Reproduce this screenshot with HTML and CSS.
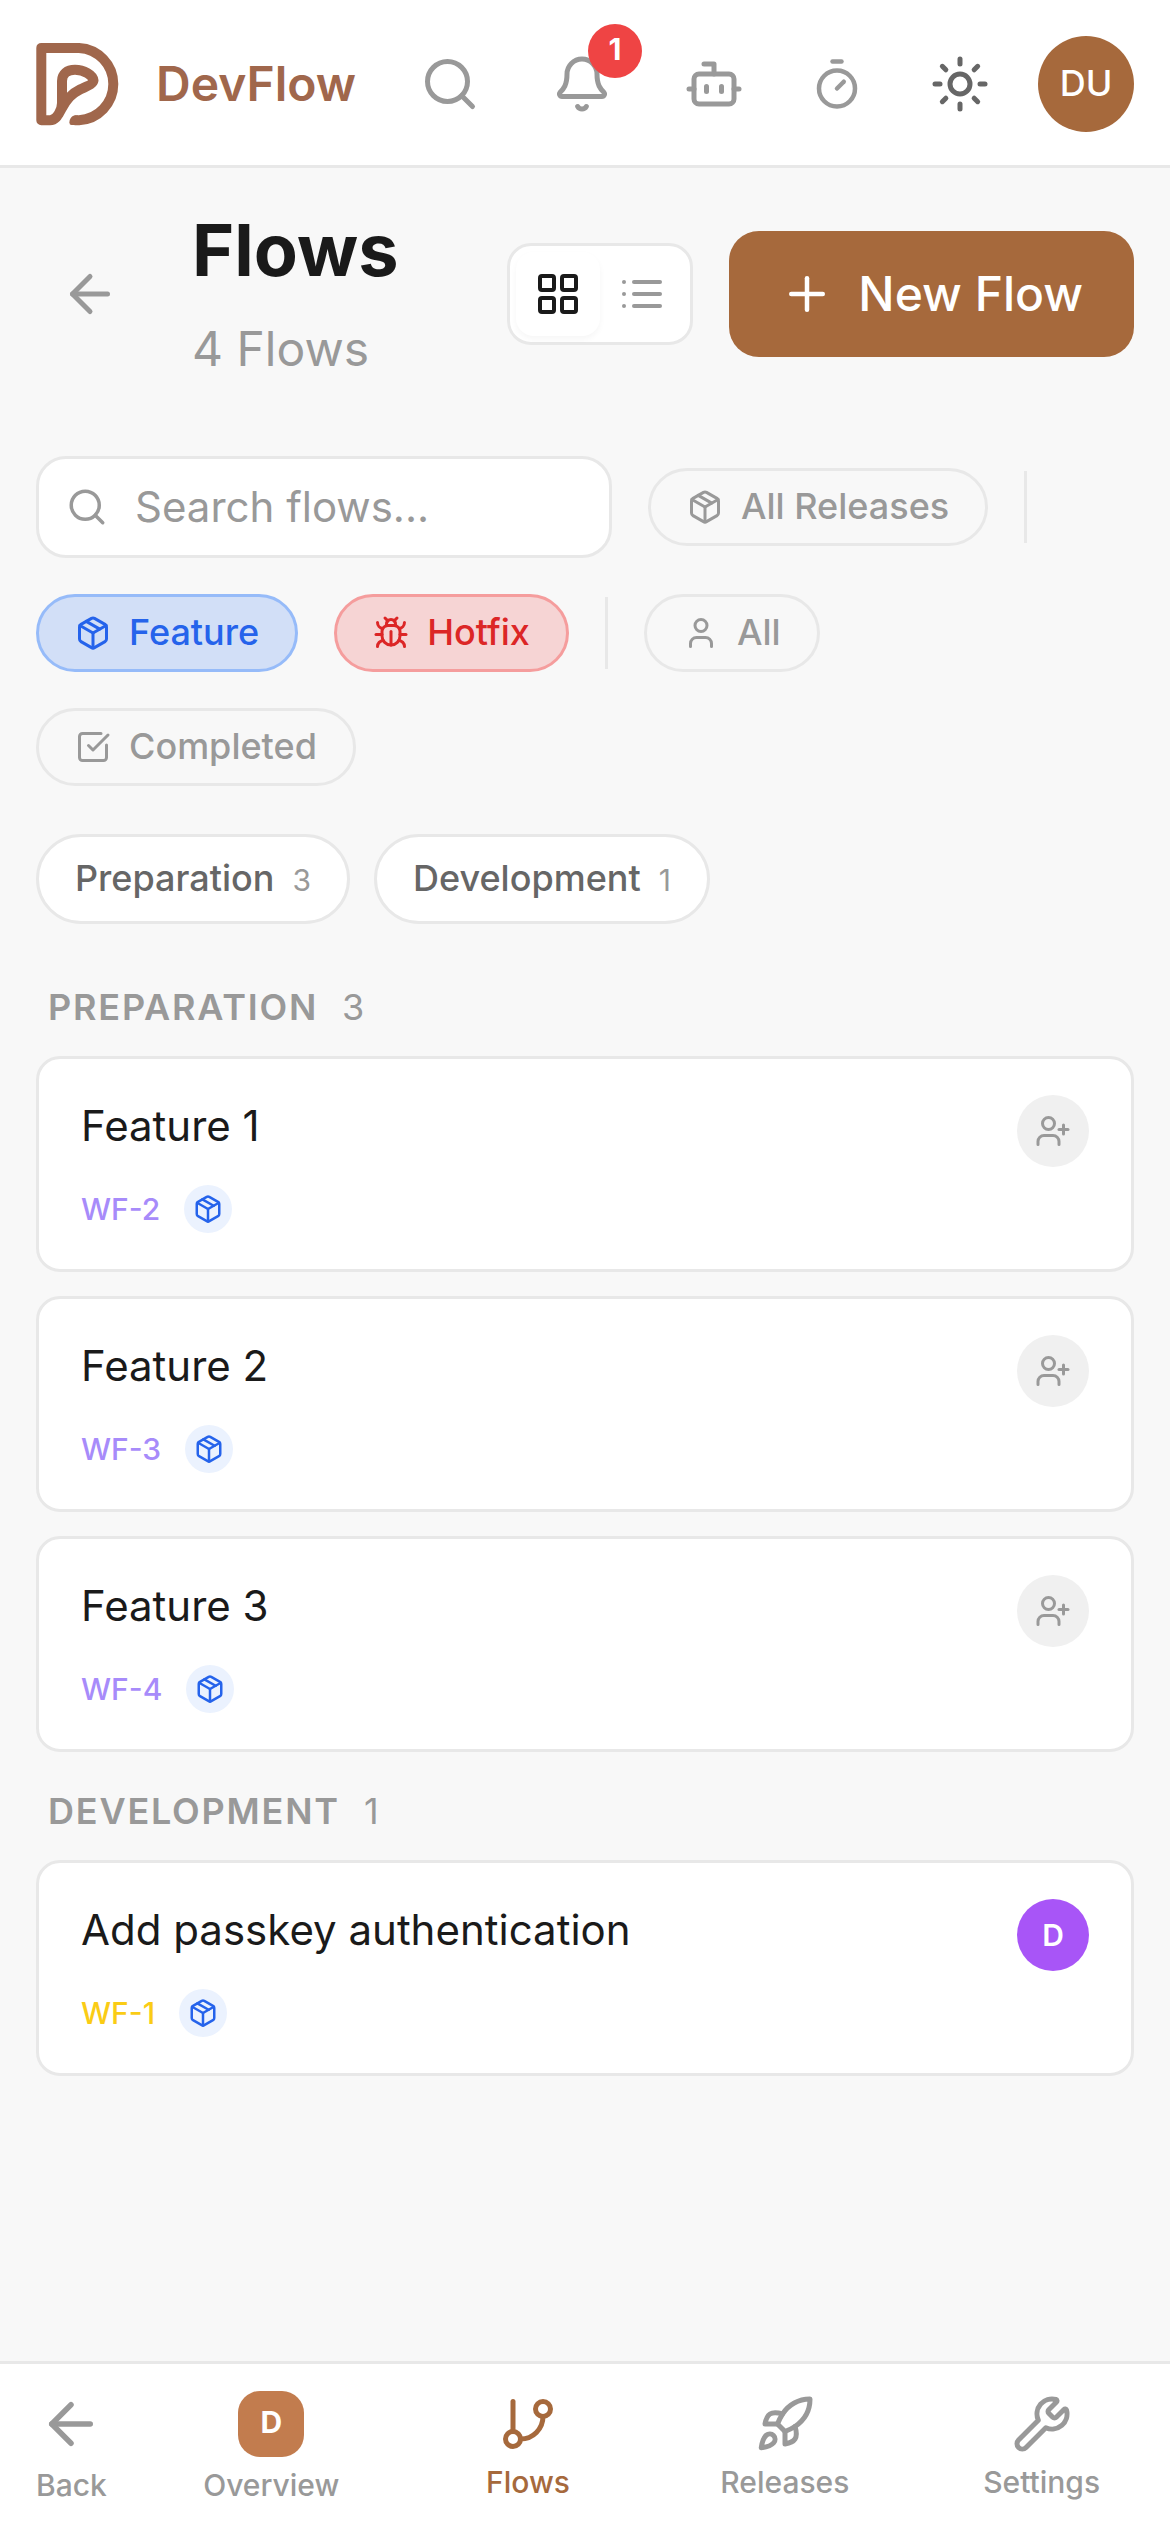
FILE: index.html
```
<!DOCTYPE html>
<html lang="en">
<head>
    <meta charset="UTF-8">
    <meta name="viewport" content="width=device-width, initial-scale=1.0">
    <title>Flows - DevFlow</title>
    <link rel="stylesheet" href="styles.css">
</head>
<body>
    <!-- Shared icons -->
    <svg class="sprite" aria-hidden="true">
        <symbol id="i-search" viewBox="0 0 24 24"><circle cx="11" cy="11" r="8"/><path d="m21 21-4.3-4.3"/></symbol>
        <symbol id="i-back" viewBox="0 0 24 24"><path d="m12 19-7-7 7-7"/><path d="M19 12H5"/></symbol>
        <symbol id="i-package" viewBox="0 0 24 24"><path d="M11 21.73a2 2 0 0 0 2 0l7-4A2 2 0 0 0 21 16V8a2 2 0 0 0-1-1.73l-7-4a2 2 0 0 0-2 0l-7 4A2 2 0 0 0 3 8v8a2 2 0 0 0 1 1.73z"/><path d="M12 22V12"/><path d="M3.29 7 12 12l8.71-5"/><path d="m7.5 4.27 9 5.15"/></symbol>
        <symbol id="i-user-plus" viewBox="0 0 24 24"><path d="M16 21v-2a4 4 0 0 0-4-4H6a4 4 0 0 0-4 4v2"/><circle cx="9" cy="7" r="4"/><path d="M19 8v6"/><path d="M22 11h-6"/></symbol>
    </svg>

    <header class="topbar">
        <a class="brand" href="#">
            <svg class="logo" viewBox="0 0 84 84">
                <path d="M38.5 78.2H43A36.2 36.2 0 0 0 43 5.9H5.3V78.2H14C20 78.2 22 73 26 66C31 57 35 52 44 47.5C50 44.5 57 42.5 57.5 38.5C57 33 48 27.8 39 27.8C31 27.8 26 32 26 39V61C26 68 21 78.2 14 78.2"/>
                <path class="logo-end" d="M38.5 73.4C35.5 74 33.4 77 33.4 80.5Q33.4 83 35.5 83H42V73.4Z"/>
            </svg>
            <span>DevFlow</span>
        </a>
        <div class="actions">
            <button class="icon-btn"><svg class="icon"><use href="#i-search"/></svg></button>
            <button class="icon-btn">
                <svg class="icon" viewBox="0 0 24 24"><path d="M10.268 21a2 2 0 0 0 3.464 0"/><path d="M3.262 15.326A1 1 0 0 0 4 17h16a1 1 0 0 0 .74-1.673C19.41 13.956 18 12.499 18 8A6 6 0 0 0 6 8c0 4.499-1.411 5.956-2.738 7.326"/></svg>
                <span class="badge">1</span>
            </button>
            <button class="icon-btn"><svg class="icon" viewBox="0 0 24 24"><path d="M12 8V4H8"/><rect width="16" height="12" x="4" y="8" rx="2"/><path d="M2 14h2"/><path d="M20 14h2"/><path d="M15 13v2"/><path d="M9 13v2"/></svg></button>
            <button class="icon-btn timer"><svg class="icon" viewBox="0 0 24 24"><path d="M10 2h4"/><path d="m12 14 3-3"/><circle cx="12" cy="14" r="8"/></svg></button>
            <button class="icon-btn theme"><svg class="icon" viewBox="0 0 24 24"><circle cx="12" cy="12" r="4"/><path d="M12 2v2"/><path d="M12 20v2"/><path d="m4.93 4.93 1.41 1.41"/><path d="m17.66 17.66 1.41 1.41"/><path d="M2 12h2"/><path d="M20 12h2"/><path d="m6.34 17.66-1.41 1.41"/><path d="m19.07 4.93-1.41 1.41"/></svg></button>
            <div class="avatar">DU</div>
        </div>
    </header>

    <main>
        <div class="page-head">
            <button class="icon-btn"><svg class="icon"><use href="#i-back"/></svg></button>
            <div class="page-title">
                <h1>Flows</h1>
                <p>4 Flows</p>
            </div>
            <div class="view-toggle">
                <button class="active"><svg class="icon" viewBox="0 0 24 24"><rect width="7" height="7" x="3" y="3" rx="1"/><rect width="7" height="7" x="14" y="3" rx="1"/><rect width="7" height="7" x="14" y="14" rx="1"/><rect width="7" height="7" x="3" y="14" rx="1"/></svg></button>
                <button><svg class="icon" viewBox="0 0 24 24"><path d="M3 6h.01"/><path d="M3 12h.01"/><path d="M3 18h.01"/><path d="M8 6h13"/><path d="M8 12h13"/><path d="M8 18h13"/></svg></button>
            </div>
            <button class="btn-primary">
                <svg class="icon" viewBox="0 0 24 24"><path d="M5 12h14"/><path d="M12 5v14"/></svg>
                New Flow
            </button>
        </div>

        <div class="filters">
            <label class="search">
                <svg class="icon"><use href="#i-search"/></svg>
                <input type="text" placeholder="Search flows...">
            </label>
            <button class="chip"><svg class="icon"><use href="#i-package"/></svg>All Releases</button>
            <span class="divider"></span>
            <button class="chip feature"><svg class="icon"><use href="#i-package"/></svg>Feature</button>
            <button class="chip hotfix"><svg class="icon" viewBox="0 0 24 24"><path d="m8 2 1.88 1.88"/><path d="M14.12 3.88 16 2"/><path d="M9 7.13v-1a3.003 3.003 0 1 1 6 0v1"/><path d="M12 20c-3.3 0-6-2.7-6-6v-3a4 4 0 0 1 4-4h4a4 4 0 0 1 4 4v3c0 3.3-2.7 6-6 6"/><path d="M12 20v-9"/><path d="M6.53 9C4.6 8.8 3 7.1 3 5"/><path d="M6 13H2"/><path d="M3 21c0-2.1 1.7-3.9 3.8-4"/><path d="M20.97 5c0 2.1-1.6 3.8-3.5 4"/><path d="M22 13h-4"/><path d="M17.2 17c2.1.1 3.8 1.9 3.8 4"/></svg>Hotfix</button>
            <span class="divider"></span>
            <button class="chip"><svg class="icon" viewBox="0 0 24 24"><path d="M19 21v-2a4 4 0 0 0-4-4H9a4 4 0 0 0-4 4v2"/><circle cx="12" cy="7" r="4"/></svg>All</button>
            <button class="chip"><svg class="icon" viewBox="0 0 24 24"><path d="M21 10.656V19a2 2 0 0 1-2 2H5a2 2 0 0 1-2-2V5a2 2 0 0 1 2-2h12.344"/><path d="m9 11 3 3L22 4"/></svg>Completed</button>
        </div>

        <div class="stages">
            <button class="stage">Preparation <span>3</span></button>
            <button class="stage">Development <span>1</span></button>
        </div>

        <section class="group">
            <h2>Preparation <span>3</span></h2>
            <article class="card">
                <div class="card-top">
                    <h3>Feature 1</h3>
                    <button class="assignee"><svg class="icon"><use href="#i-user-plus"/></svg></button>
                </div>
                <div class="card-meta"><span class="key">WF-2</span><span class="type"><svg class="icon"><use href="#i-package"/></svg></span></div>
            </article>
            <article class="card">
                <div class="card-top">
                    <h3>Feature 2</h3>
                    <button class="assignee"><svg class="icon"><use href="#i-user-plus"/></svg></button>
                </div>
                <div class="card-meta"><span class="key">WF-3</span><span class="type"><svg class="icon"><use href="#i-package"/></svg></span></div>
            </article>
            <article class="card">
                <div class="card-top">
                    <h3>Feature 3</h3>
                    <button class="assignee"><svg class="icon"><use href="#i-user-plus"/></svg></button>
                </div>
                <div class="card-meta"><span class="key">WF-4</span><span class="type"><svg class="icon"><use href="#i-package"/></svg></span></div>
            </article>
        </section>

        <section class="group">
            <h2>Development <span>1</span></h2>
            <article class="card">
                <div class="card-top">
                    <h3>Add passkey authentication</h3>
                    <button class="assignee assigned">D</button>
                </div>
                <div class="card-meta"><span class="key in-dev">WF-1</span><span class="type"><svg class="icon"><use href="#i-package"/></svg></span></div>
            </article>
        </section>
    </main>

    <nav class="bottom-nav">
        <a class="nav-item nav-back" href="#"><svg class="icon"><use href="#i-back"/></svg>Back</a>
        <div class="nav-links">
            <a class="nav-item" href="#"><span class="project">D</span>Overview</a>
            <a class="nav-item current" href="#"><svg class="icon" viewBox="0 0 24 24"><path d="M6 3v12"/><circle cx="18" cy="6" r="3"/><circle cx="6" cy="18" r="3"/><path d="M18 9a9 9 0 0 1-9 9"/></svg>Flows</a>
            <a class="nav-item" href="#"><svg class="icon" viewBox="0 0 24 24"><path d="M4.5 16.5c-1.5 1.26-2 5-2 5s3.74-.5 5-2c.71-.84.7-2.13-.09-2.91a2.18 2.18 0 0 0-2.91-.09z"/><path d="m12 15-3-3a22 22 0 0 1 2-3.95A12.88 12.88 0 0 1 22 2c0 2.72-.78 7.5-6 11a22.35 22.35 0 0 1-4 2z"/><path d="M9 12H4s.55-3.03 2-4c1.62-1.08 5 0 5 0"/><path d="M12 15v5s3.03-.55 4-2c1.08-1.62 0-5 0-5"/></svg>Releases</a>
            <a class="nav-item" href="#"><svg class="icon" viewBox="0 0 24 24"><path d="M14.7 6.3a1 1 0 0 0 0 1.4l1.6 1.6a1 1 0 0 0 1.4 0l3.106-3.105c.32-.322.863-.22.983.218a6 6 0 0 1-8.259 7.057l-7.91 7.91a1 1 0 0 1-2.999-3l7.91-7.91a6 6 0 0 1 7.057-8.259c.438.12.54.662.219.984z"/></svg>Settings</a>
        </div>
    </nav>
</body>
</html>
```
FILE: styles.css
```
:root {
    --bg: #f8f8f8;
    --surface: #ffffff;
    --border: #e8e8e8;
    --text: #1a1a1a;
    --text-mid: #666666;
    --text-soft: #999999;
    --primary: #a6693c;
}

* {
    box-sizing: border-box;
    margin: 0;
    padding: 0;
}

body {
    display: flex;
    flex-direction: column;
    height: 100vh;
    font-family: 'Inter', sans-serif;
    line-height: 1.5;
    color: var(--text);
    background-color: var(--bg);
    overflow: hidden;
}

button,
input {
    font: inherit;
    color: inherit;
    background: none;
    border: none;
}

a {
    color: inherit;
    text-decoration: none;
}

.sprite {
    display: none;
}

.icon {
    display: block;
    flex-shrink: 0;
    width: 60px;
    height: 60px;
    fill: none;
    stroke: currentColor;
    stroke-width: 2;
    stroke-linecap: round;
    stroke-linejoin: round;
}

/* Top bar */
.topbar {
    display: flex;
    align-items: center;
    justify-content: space-between;
    height: 168px;
    padding: 3px 36px 0;
    background-color: var(--surface);
    border-bottom: 3px solid var(--border);
}

.brand {
    display: flex;
    align-items: center;
    gap: 36px;
    font-size: 48px;
    font-weight: 600;
    color: #a0674c;
}

.logo {
    width: 84px;
    height: 84px;
    fill: none;
    stroke: currentColor;
    stroke-width: 10;
    stroke-linejoin: round;
}

.logo-end {
    fill: currentColor;
    stroke: none;
}

.actions {
    display: flex;
    align-items: center;
    gap: 24px;
}

.icon-btn {
    position: relative;
    padding: 24px;
    color: var(--text-soft);
}

.timer {
    padding: 18px;
}

.timer .icon {
    width: 54px;
    height: 54px;
}

.theme {
    color: var(--text-mid);
}

.badge {
    position: absolute;
    top: -6px;
    right: -6px;
    width: 54px;
    height: 54px;
    border-radius: 50%;
    background-color: #ef4444;
    color: white;
    font-size: 30px;
    font-weight: 700;
    line-height: 51px;
    text-align: center;
}

.avatar {
    width: 96px;
    height: 96px;
    border-radius: 50%;
    background-color: var(--primary);
    color: white;
    font-size: 36px;
    font-weight: 500;
    line-height: 95px;
    text-align: center;
}

/* Page content */
main {
    flex: 1;
    padding: 36px;
}

.page-head {
    display: flex;
    align-items: center;
    height: 180px;
    margin-bottom: 72px;
}

.page-title {
    flex: 1;
    margin-left: 48px;
}

.page-title h1 {
    font-size: 72px;
    font-weight: 700;
    line-height: 92px;
    margin-bottom: 17px;
}

.page-title p {
    font-size: 48px;
    color: var(--text-soft);
}

.view-toggle {
    display: flex;
    padding: 6px;
    margin-right: 36px;
    border: 3px solid var(--border);
    border-radius: 24px;
    background-color: var(--surface);
}

.view-toggle button {
    padding: 18px;
    border-radius: 18px;
    color: var(--text-soft);
}

.view-toggle .icon {
    width: 48px;
    height: 48px;
}

.view-toggle .active {
    color: var(--text);
    box-shadow: 0 3px 6px rgba(0, 0, 0, 0.04);
}

.btn-primary {
    display: flex;
    align-items: center;
    gap: 24px;
    height: 126px;
    padding: 0 51px;
    border-radius: 30px;
    background-color: var(--primary);
    color: white;
    font-size: 48px;
    font-weight: 500;
}

.btn-primary .icon {
    width: 54px;
    height: 54px;
}

/* Filters */
.filters {
    display: flex;
    flex-wrap: wrap;
    align-items: center;
    gap: 36px;
    padding-right: 36px;
    margin-bottom: 48px;
}

.search {
    display: flex;
    align-items: center;
    gap: 27px;
    width: 576px;
    height: 102px;
    padding: 0 27px;
    border: 3px solid var(--border);
    border-radius: 30px;
    background-color: var(--surface);
    color: var(--text-soft);
}

.search .icon {
    width: 42px;
    height: 42px;
}

.search input {
    flex: 1;
    min-width: 0;
    padding-bottom: 2px;
    font-size: 42px;
    outline: none;
}

.search input::placeholder {
    color: var(--text-soft);
}

.chip {
    display: flex;
    align-items: center;
    gap: 18px;
    height: 78px;
    padding: 0 36px 2px;
    border: 3px solid var(--border);
    border-radius: 39px;
    color: var(--text-soft);
    font-size: 36px;
    font-weight: 500;
}

.chip .icon {
    width: 36px;
    height: 36px;
    margin-top: 2px;
}

.chip.feature {
    color: #2563eb;
    background-color: #d2dff7;
    border-color: #96bbf9;
}

.chip.hotfix {
    color: #dc2626;
    background-color: #f6d4d4;
    border-color: #f59d9d;
}

.divider {
    width: 3px;
    height: 72px;
    background-color: var(--border);
}

/* Stage tabs */
.stages {
    display: flex;
    gap: 24px;
    margin-bottom: 56px;
}

.stage {
    display: flex;
    align-items: baseline;
    gap: 18px;
    height: 90px;
    padding: 14px 36px 16px;
    border: 3px solid var(--border);
    border-radius: 45px;
    background-color: var(--surface);
    color: var(--text-mid);
    font-size: 36px;
    font-weight: 500;
}

.stage span {
    font-size: 30px;
    font-weight: 400;
    color: var(--text-soft);
}

/* Flow groups */
.group {
    display: flex;
    flex-direction: column;
    gap: 24px;
    margin-bottom: 32px;
}

.group h2 {
    display: flex;
    gap: 24px;
    padding-left: 12px;
    margin-bottom: -2px;
    color: var(--text-soft);
    font-size: 36px;
    font-weight: 600;
    letter-spacing: 0.05em;
    text-transform: uppercase;
}

.group h2 span {
    font-weight: 400;
}

.card {
    height: 216px;
    padding: 36px 42px;
    border: 3px solid var(--border);
    border-radius: 24px;
    background-color: var(--surface);
}

.card-top {
    display: flex;
    justify-content: space-between;
    align-items: flex-start;
    margin-bottom: 18px;
}

.card h3 {
    font-size: 42px;
    font-weight: 400;
    line-height: 61px;
}

.assignee {
    display: flex;
    align-items: center;
    justify-content: center;
    width: 72px;
    height: 72px;
    border-radius: 50%;
    background-color: #f0f0f0;
    color: var(--text-soft);
    font-size: 30px;
    font-weight: 600;
}

.assignee .icon {
    width: 36px;
    height: 36px;
}

.assigned {
    background-color: #a855f7;
    color: white;
}

.card-meta {
    display: flex;
    align-items: center;
    gap: 24px;
    height: 48px;
    font-size: 30px;
    font-weight: 500;
}

.key {
    color: #a78bfa;
}

.in-dev {
    color: #facc15;
}

.type {
    display: flex;
    align-items: center;
    justify-content: center;
    width: 48px;
    height: 48px;
    border-radius: 50%;
    background-color: #ebf2fe;
    color: #2563eb;
}

.type .icon {
    width: 30px;
    height: 30px;
}

/* Bottom navigation */
.bottom-nav {
    display: flex;
    height: 171px;
    padding: 27px 0 24px 36px;
    background-color: var(--surface);
    border-top: 3px solid var(--border);
}

.nav-links {
    display: flex;
    flex: 1;
    margin-left: 36px;
}

.nav-links .nav-item {
    flex: 1;
}

.nav-item {
    display: flex;
    flex-direction: column;
    align-items: center;
    justify-content: center;
    gap: 6px;
    color: var(--text-soft);
    font-size: 30px;
    font-weight: 500;
    line-height: 45px;
}

.nav-back .icon {
    width: 66px;
    height: 66px;
}

.nav-item.current {
    color: var(--primary);
}

.project {
    width: 66px;
    height: 66px;
    border-radius: 22px;
    background-color: #c27c4e;
    color: white;
    font-weight: 700;
    line-height: 63px;
    text-align: center;
}
```
